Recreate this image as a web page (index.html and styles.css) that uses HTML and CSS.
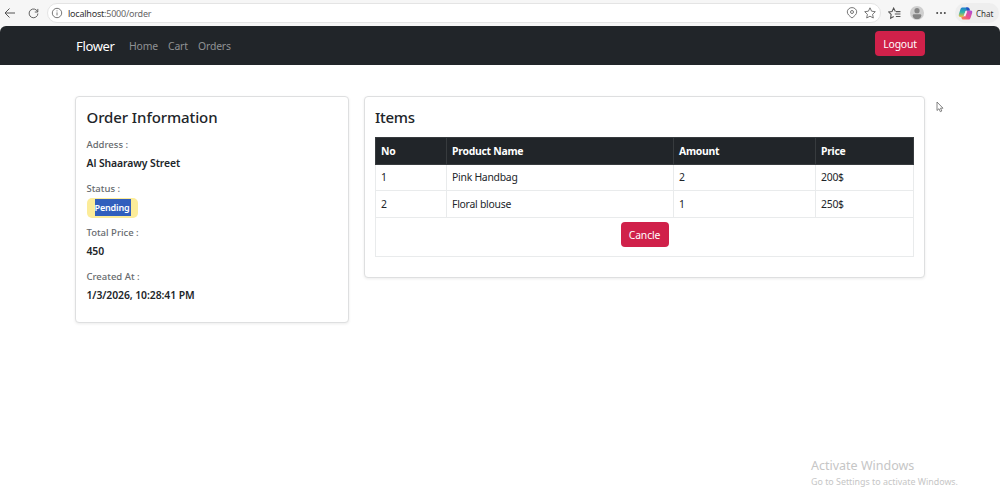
FILE: index.html
```html
<!DOCTYPE html>
<html lang="en">
<head>
  <meta charset="UTF-8" />
  <meta name="viewport" content="width=device-width, initial-scale=1.0"/>
  <title>Flower</title>
  <link rel="stylesheet" href="styles.css">
</head>
<body>
  <div class="browser-bar">
    <svg class="back" viewBox="0 0 12 12"><path d="M11 6H1M5.500 1.500L1 6l4.500 4.500"/></svg>
    <svg class="reload" viewBox="0 0 12 12"><path d="M10.500 4.200A4.800 4.800 0 1 0 10.800 6M10.700 1v3.400H7.400"/></svg>
    <div class="address">
      <svg class="info" viewBox="0 0 12 12"><circle cx="6" cy="6" r="4.700"/><path d="M6 5.400v3M6 3.400v1"/></svg>
      <span class="url"><b>localhost</b>:5000/order</span>
      <svg class="pin" viewBox="0 0 12 12"><path d="M6 11C3.500 9 1.300 7.300 1.300 4.900a4.700 4.300 0 0 1 9.400 0C10.700 7.300 8.500 9 6 11z"/><circle cx="6" cy="5" r="1.500"/></svg>
      <svg class="star" viewBox="0 0 12 12"><path d="M6 .8l1.600 3.400 3.700.5-2.700 2.600.7 3.700L6 9.200 2.700 11l.7-3.700L.7 4.700l3.700-.5z"/></svg>
    </div>
    <svg class="favorites" viewBox="0 0 12 12"><path d="M6.800 4.200L5.200 1 3.700 4.100.6 4.600l2.300 2.200-.5 3.600 2.900-1.600M7.300 4.300h4.200M6.300 6.500h5.200M7.300 8.700h4.200"/></svg>
    <svg class="avatar" viewBox="0 0 14 14"><circle cx="7" cy="7" r="7" fill="#cfcfcf"/><circle cx="7" cy="4.700" r="2.600" fill="#858585"/><path d="M2.700 9.500q0-1.300 1.300-1.300h6q1.300 0 1.300 1.300c0 2.500-2 3.600-4.300 3.600S2.700 12 2.700 9.500z" fill="#858585"/></svg>
    <svg class="dots" viewBox="0 0 12 4"><circle cx="2.200" cy="2" r="1"/><circle cx="6" cy="2" r="1"/><circle cx="9.800" cy="2" r="1"/></svg>
    <div class="chat">
      <svg class="copilot" viewBox="0 0 16 16">
        <defs>
          <linearGradient id="cool" x1="0" y1="0" x2="0" y2="1">
            <stop offset="0" stop-color="#1c7ed0"/><stop offset=".5" stop-color="#32b5a8"/><stop offset="1" stop-color="#f3c13a"/>
          </linearGradient>
          <linearGradient id="warm" x1="1" y1="0" x2="0" y2="1">
            <stop offset="0" stop-color="#a34fe0"/><stop offset=".55" stop-color="#ee4f8b"/><stop offset="1" stop-color="#fb8a49"/>
          </linearGradient>
        </defs>
        <path d="M5 1.500h5.500c1 0 1.500.8 1.800 2l.3 1.200H9.500c-1 0-1.500.6-1.800 1.600L6.500 10c-.4 1.300-1 1.800-2.200 1.800H2.500C.8 11.800.5 10.300 1 8.600L2.600 3.500C3 2.200 3.700 1.500 5 1.500z" fill="url(#cool)"/>
        <path d="M11 14.500H5.500c-1 0-1.500-.8-1.800-2l-.2-.7h.8c1.200 0 1.800-.5 2.200-1.800l1.200-3.700c.3-1 .8-1.600 1.800-1.600h4c1.700 0 2 1.200 1.500 2.900l-1.600 4.900c-.4 1.300-1.100 2-2.400 2z" fill="url(#warm)"/>
        <path d="M8.500 1.500h2c1 0 1.500.8 1.800 2l.3 1.200H9.500z" fill="#254fc4"/>
        <path d="M9 5.500L6.900 11" stroke="#f6f6f6" stroke-width="1.800"/>
      </svg>
      <span>Chat</span>
    </div>
  </div>

  <div class="page">
    <nav class="navbar">
      <div class="container nav-inner">
        <a class="brand">Flower</a>
        <a class="nav-link home">Home</a>
        <a class="nav-link cart">Cart</a>
        <a class="nav-link orders">Orders</a>
        <button class="btn logout">Logout</button>
      </div>
    </nav>

    <main class="container content">
      <section class="card info-card">
        <h2 class="info-title">Order Information</h2>
        <div class="field">
          <div class="label">Address :</div>
          <div class="value">Al Shaarawy Street</div>
        </div>
        <div class="field">
          <div class="label">Status :</div>
          <div class="badge"><span>Pending</span></div>
        </div>
        <div class="field">
          <div class="label">Total Price :</div>
          <div class="value">450</div>
        </div>
        <div class="field">
          <div class="label">Created At :</div>
          <div class="value">1/3/2026, 10:28:41 PM</div>
        </div>
      </section>

      <section class="card items-card">
        <h2>Items</h2>
        <table>
          <colgroup><col class="col-no"><col class="col-name"><col class="col-amount"><col></colgroup>
          <thead>
            <tr><th>No</th><th>Product Name</th><th>Amount</th><th>Price</th></tr>
          </thead>
          <tbody>
            <tr><td>1</td><td>Pink Handbag</td><td>2</td><td>200$</td></tr>
            <tr><td>2</td><td>Floral blouse</td><td>1</td><td>250$</td></tr>
            <tr class="actions"><td colspan="4"><button class="btn">Cancle</button></td></tr>
          </tbody>
        </table>
      </section>
    </main>
  </div>

  <div class="watermark">
    <div class="big">Activate Windows</div>
    <div class="small">Go to Settings to activate Windows.</div>
  </div>
  <svg class="cursor" viewBox="0 0 8 12"><path d="M1 1v8.500l2-1.800 1.300 3 1.500-.7-1.300-2.800H7z"/></svg>
</body>
</html>
```

FILE: styles.css
```css
* {
  box-sizing: border-box;
}
body {
  margin: 0;
  height: 498px;
  overflow: hidden;
  background: #f6f6f6;
  color: #212529;
  font-family: "Noto Sans", "Open Sans", sans-serif;
  font-size: 10.4px;
}
svg {
  display: block;
  flex: none;
  fill: none;
  stroke: #555;
  stroke-width: 1;
}

/* browser toolbar */
.browser-bar {
  display: flex;
  align-items: center;
  height: 26px;
  padding-left: 4px;
}
.back {
  width: 12px;
  height: 12px;
}
.reload {
  width: 11px;
  height: 11px;
  margin-left: 12px;
}
.address {
  display: flex;
  align-items: center;
  width: 834px;
  height: 20px;
  margin-left: 8px;
  padding-left: 3px;
  border: 1px solid #e4e4e4;
  border-radius: 10px;
  background: #fff;
}
.info,
.pin,
.star {
  width: 12px;
  height: 12px;
  stroke-width: .8;
}
.url {
  flex: 1;
  margin-left: 5px;
  font-size: 9px;
  letter-spacing: -.22px;
  color: #666;
}
.url b {
  font-weight: 400;
  color: #333;
}
.star {
  margin: 0 4px 0 6px;
}
.favorites {
  width: 13px;
  height: 13px;
  margin-left: 7px;
}
.avatar {
  width: 14px;
  height: 14px;
  margin-left: 9px;
  stroke: none;
}
.dots {
  width: 12px;
  height: 4px;
  margin-left: 11px;
  fill: #444;
  stroke: none;
}
.chat {
  display: flex;
  align-items: center;
  width: 44px;
  height: 20px;
  margin-left: 8px;
  padding-left: 3px;
  border-radius: 10px;
  background: #eee;
  font-size: 8px;
  color: #333;
}
.copilot {
  width: 15px;
  height: 15px;
  margin-right: 3px;
  stroke: none;
}

/* page */
.page {
  height: 472px;
  border-radius: 6px 6px 0 0;
  overflow: hidden;
  background: #fff;
}
.container {
  width: 850px;
  margin: 0 auto;
}
.navbar {
  height: 39px;
  background: #212529;
}
.nav-inner {
  display: flex;
  align-items: center;
  height: 39px;
}
.brand {
  width: 54px;
  padding-left: 1px;
  font-size: 13px;
  letter-spacing: -.35px;
  color: #fff;
}
.nav-link {
  letter-spacing: -.15px;
  color: #909294;
}
.home {
  width: 39px;
}
.cart {
  width: 29px;
}
.orders {
  padding-left: 1px;
}
.btn {
  height: 25px;
  padding: 0;
  border: 0;
  border-radius: 4px;
  background: #d0214a;
  color: #fff;
  font-family: inherit;
  font-size: 10.4px;
  letter-spacing: -.15px;
  width: 48px;
}
.logout {
  width: 50px;
  margin: -4px 0 0 auto;
  letter-spacing: -.2px;
}
.content {
  display: flex;
  align-items: flex-start;
  gap: 15px;
  padding-top: 31px;
}
.card {
  padding: 10px;
  border: 1px solid #dedfe0;
  border-radius: 4px;
  background: #fff;
  box-shadow: 0 1px 3px rgba(0, 0, 0, .08);
}
.info-card {
  width: 274px;
  height: 227px;
  padding-left: 10.500px;
}
.items-card {
  width: 561px;
  height: 182px;
}
h2 {
  margin: 0;
  font-size: 15px;
  line-height: 20px;
  font-weight: 500;
  letter-spacing: -.3px;
}
.info-title {
  margin-bottom: 9px;
  letter-spacing: -.1px;
}
.field {
  height: 44px;
}
.label {
  height: 18px;
  font-size: 9.500px;
  line-height: 18px;
  font-weight: 500;
  color: #666a6e;
}
.value {
  font-size: 10.4px;
  line-height: 19px;
  font-weight: 600;
  letter-spacing: -.08px;
}
.badge {
  width: 51px;
  height: 20px;
  padding: 1px 0 0 8px;
  border-radius: 5px;
  background: #fcec99;
}
.badge span {
  display: block;
  width: 36px;
  height: 17px;
  background: #315fbd;
  color: #fff;
  font-size: 9px;
  line-height: 17px;
  font-weight: 600;
  letter-spacing: -.15px;
}

/* items table */
table {
  width: 539px;
  margin-top: 10px;
  border-collapse: collapse;
  table-layout: fixed;
}
.col-no {
  width: 71px;
}
.col-name {
  width: 227px;
}
.col-amount {
  width: 142px;
}
th,
td {
  height: 26.500px;
  padding: 0 5px;
  border: 1px solid #e9ebec;
  text-align: left;
  letter-spacing: -.25px;
}
th {
  border-color: #373b3e;
  background: #212529;
  color: #fff;
  font-weight: 700;
}
.actions td {
  height: 39px;
  padding-bottom: 4px;
  text-align: center;
  vertical-align: middle;
}

/* desktop overlays */
.watermark {
  position: absolute;
  left: 811px;
  top: 457px;
  color: #c6c6c6;
}
.big {
  font-size: 12.500px;
  line-height: 18px;
}
.small {
  font-size: 8.900px;
  line-height: 14px;
}
.cursor {
  position: absolute;
  left: 936px;
  top: 101px;
  width: 8px;
  height: 12px;
  fill: #fff;
  stroke: #666;
  stroke-width: .8;
}
```
